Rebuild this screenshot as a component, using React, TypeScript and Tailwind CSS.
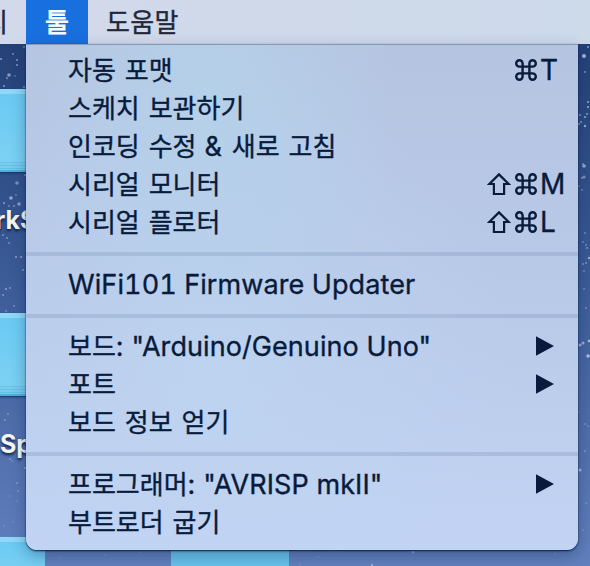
import React from "react";

type Part = { t: string; c?: string };
type Item = { parts: Part[]; keys?: "T" | "M" | "L"; sub?: boolean };

const kr = "text-[26px] [word-spacing:1.6px]";
const la = "text-[27px] tracking-[0.08px]";

const groups: Item[][] = [
  [
    { parts: [{ t: "자동 포맷" }], keys: "T" },
    { parts: [{ t: "스케치 보관하기" }] },
    { parts: [{ t: "인코딩 수정 " }, { t: "&", c: "text-[27px] -ml-px mr-px" }, { t: " 새로 고침" }] },
    { parts: [{ t: "시리얼 모니터" }], keys: "M" },
    { parts: [{ t: "시리얼 플로터" }], keys: "L" },
  ],
  [{ parts: [{ t: "WiFi101 Firmware Updater", c: "text-[27px] tabular-nums tracking-[0.1px]" }] }],
  [
    { parts: [{ t: "보드" }, { t: ": \"Arduino/Genuino Uno\"", c: la }], sub: true },
    { parts: [{ t: "포트" }], sub: true },
    { parts: [{ t: "보드 정보 얻기" }] },
  ],
  [
    { parts: [{ t: "프로그래머" }, { t: ": \"AVRISP mkII\"", c: la }], sub: true },
    { parts: [{ t: "부트로더 굽기" }] },
  ],
];

// x, y, radius, opacity
const stars: [number, number, number, number][] = [
  [13, 54, 1, 0.5], [17, 60, 1, 0.6], [17, 65, 1, 0.6], [1, 59, 1.1, 0.6], [9, 75, 1.8, 0.6], [4, 86, 1, 0.6],
  [24, 47, 1, 0.4], [24, 87, 1, 0.5], [15, 76, 1, 0.3], [7, 78, 1.2, 0.4],
  [17, 183, 1.8, 0.5], [11, 198, 1.8, 0.65], [19, 204, 1.7, 0.6], [4, 203, 1, 0.6], [16, 195, 1, 0.4], [14, 206, 1, 0.5],
  [25, 175, 1, 0.5], [9, 206, 1, 0.4], [3, 235, 1, 0.5], [7, 238, 1, 0.5], [9, 243, 1, 0.4], [16, 257, 1, 0.6],
  [21, 257, 1, 0.6], [23, 270, 1, 0.5], [6, 289, 1, 0.6], [10, 288, 1, 0.5], [3, 295, 1, 0.5], [6, 311, 1, 0.4], [14, 306, 1, 0.4],
  [8, 414, 1, 0.4], [5, 420, 1, 0.4], [10, 459, 1, 0.4], [12, 461, 1, 0.3], [25, 468, 1.3, 0.4],
  [17, 483, 1, 0.4], [18, 491, 1, 0.3], [10, 496, 0.8, 0.3], [17, 501, 0.8, 0.3], [13, 522, 0.8, 0.3], [4, 526, 0.8, 0.3],
  [584, 56, 2, 0.8], [588, 47, 1, 0.6], [585, 72, 1, 0.5], [588, 102, 1, 0.7], [588, 107, 1.1, 0.7], [587, 114, 1, 0.6],
  [585, 117, 1.1, 0.7], [580, 115, 1, 0.6], [581, 122, 1.1, 0.6], [579, 124, 1, 0.6], [585, 126, 1.2, 0.7],
  [584, 166, 1.8, 0.7], [583, 164, 1, 0.5], [584, 177, 1.6, 0.5], [582, 178, 1, 0.5], [582, 190, 1, 0.4], [579, 186, 1, 0.3],
  [585, 233, 1, 0.4], [583, 242, 1, 0.4], [586, 245, 1, 0.4], [587, 248, 1, 0.5], [589, 258, 1.2, 0.7], [586, 263, 1, 0.5],
  [583, 264, 1, 0.5], [584, 271, 1, 0.4], [584, 289, 1, 0.4], [586, 308, 1, 0.4],
  [580, 345, 1.5, 0.7], [583, 343, 1.5, 0.7], [589, 341, 1.3, 0.8], [588, 356, 1.7, 0.85], [579, 412, 1, 0.2],
  [585, 424, 1, 0.3], [588, 426, 1, 0.3], [585, 451, 1, 0.4], [580, 470, 1.5, 0.75], [586, 503, 1, 0.3], [583, 530, 1, 0.3],
  [413, 552, 1.4, 0.55], [372, 565, 1.2, 0.6], [336, 551, 0.8, 0.3], [318, 557, 0.8, 0.3], [300, 564, 0.8, 0.3], [555, 554, 0.8, 0.3],
  [140, 553, 0.8, 0.3], [105, 555, 0.8, 0.3], [60, 558, 0.8, 0.3],
];

const folder =
  "absolute border-t-[5px] border-[#8fd8f8] bg-linear-to-b from-[#6bcaf3] to-[#7dd2f3]";

function FolderEdge() {
  return (
    <div className="absolute inset-x-0 bottom-0 h-[10px] border-t border-b-2 border-t-[#68c4ea] border-b-[#4fb0db] bg-[repeating-linear-gradient(#78cdf0_0_2px,#64c0e7_2px_3px)]" />
  );
}

function Desktop() {
  return (
    <div className="absolute inset-0 text-[25px] leading-[30px] font-bold text-[#f5f5f5] [text-shadow:0_2px_3px_#0b1c40]">
      <svg className="absolute inset-0" width="590" height="566" fill="#c9d0f2">
        {stars.map(([x, y, r, o], i) => (
          <circle key={i} cx={x} cy={y} r={r} opacity={o} />
        ))}
      </svg>
      <div className={folder + " top-[89px] -left-20 h-[83px] w-[125px] shadow-[0_1px_2px_#16305e]"}>
        <FolderEdge />
      </div>
      <div className={folder + " top-[313px] -left-20 h-[83px] w-[125px] shadow-[0_1px_2px_#16305e]"}>
        <FolderEdge />
      </div>
      <div className={folder + " top-[537px] -left-20 h-[40px] w-[125px]"} />
      <div className="absolute top-[537px] left-[171px] h-10 w-[118px] bg-[#68c3ec]" />
      <div className="absolute top-[205px] -left-[5px]">rkS</div>
      <div className="absolute top-[429px] left-0">Sp</div>
    </div>
  );
}

function Command() {
  return (
    <svg className="block" width="22" height="22" viewBox="0 0 22 22" fill="none" stroke="currentColor" strokeWidth="2.4">
      <path d="M7.600 4.400a3.200 3.200 0 1 0-3.200 3.200h13.200a3.200 3.200 0 1 0-3.200-3.200v13.200a3.200 3.200 0 1 0 3.200-3.200H4.400a3.200 3.200 0 1 0 3.200 3.200z" />
    </svg>
  );
}

function Shift() {
  return (
    <svg className="mr-1" width="24" height="24" viewBox="0 0 24 24" fill="none" stroke="currentColor" strokeWidth="2.200">
      <path d="M12 2.400 2.400 12H6.900v10h10.200V12h4.500z" />
    </svg>
  );
}

function Row({ item }: { item: Item }) {
  return (
    <div className="flex h-[38px] items-center pl-[42px]">
      <div className="flex flex-1 items-baseline pt-px leading-[38px] whitespace-pre">
        {item.parts.map((p, i) => (
          <span key={i} className={p.c ?? kr}>{p.t}</span>
        ))}
      </div>
      {item.keys && (
        <div className="flex items-center">
          {item.keys !== "T" && <Shift />}
          <Command />
          <span className="ml-[3px] w-[38px] text-[28px] leading-[38px]">{item.keys}</span>
        </div>
      )}
      {item.sub && (
        <svg className="mr-6" width="18" height="20" viewBox="0 0 18 20" fill="#091b3c">
          <path d="M0 .200 18 10 0 19.800z" />
        </svg>
      )}
    </div>
  );
}

export default function App() {
  return (
    <div className="relative h-[566px] w-[590px] overflow-hidden bg-linear-to-b from-[#203c72] via-[#3c5c98] to-[#6180bd] font-['Inter','Noto_Sans_CJK_KR',sans-serif] text-[#081b3b]">
      <Desktop />
      <div className="relative flex flex-col">
        <header className="flex h-11 items-center bg-linear-to-r from-[#d2d9ea] to-[#cddaea] text-[26px] text-[#20283a] [-webkit-text-stroke:0.35px_currentColor]">
          <div className="flex w-[26px] justify-end overflow-hidden pr-[18px] whitespace-nowrap">스케치</div>
          <div className="flex h-11 w-[62px] items-center justify-center bg-[#1870df] text-white [-webkit-text-stroke:0.9px_currentColor]">툴</div>
          <div className="pl-[18px] tracking-[0.3px]">도움말</div>
        </header>
        <main className="ml-[26px] w-[552px] rounded-b-[11px] bg-[radial-gradient(ellipse_190px_260px_at_180px_60px,#b5d3ebcc,#b5d3eb00),radial-gradient(ellipse_300px_300px_at_190px_330px,#bed6f2aa,#bed6f200),linear-gradient(#b5c5e1,#b8c9e8_45%,#c2d3f3)] pt-[7px] pb-[9px] shadow-[inset_0_1px_0_#8599b8,0_1px_2px_#0a1c44,0_6px_16px_#10254c55] [-webkit-text-stroke:0.35px_currentColor]">
          {groups.map((g, i) => (
            <section key={i}>
              {i > 0 && <div className="mt-[11px] mb-[9px] h-1 bg-[#6b7fa63a]" />}
              {g.map((it, j) => <Row key={j} item={it} />)}
            </section>
          ))}
        </main>
      </div>
    </div>
  );
}
